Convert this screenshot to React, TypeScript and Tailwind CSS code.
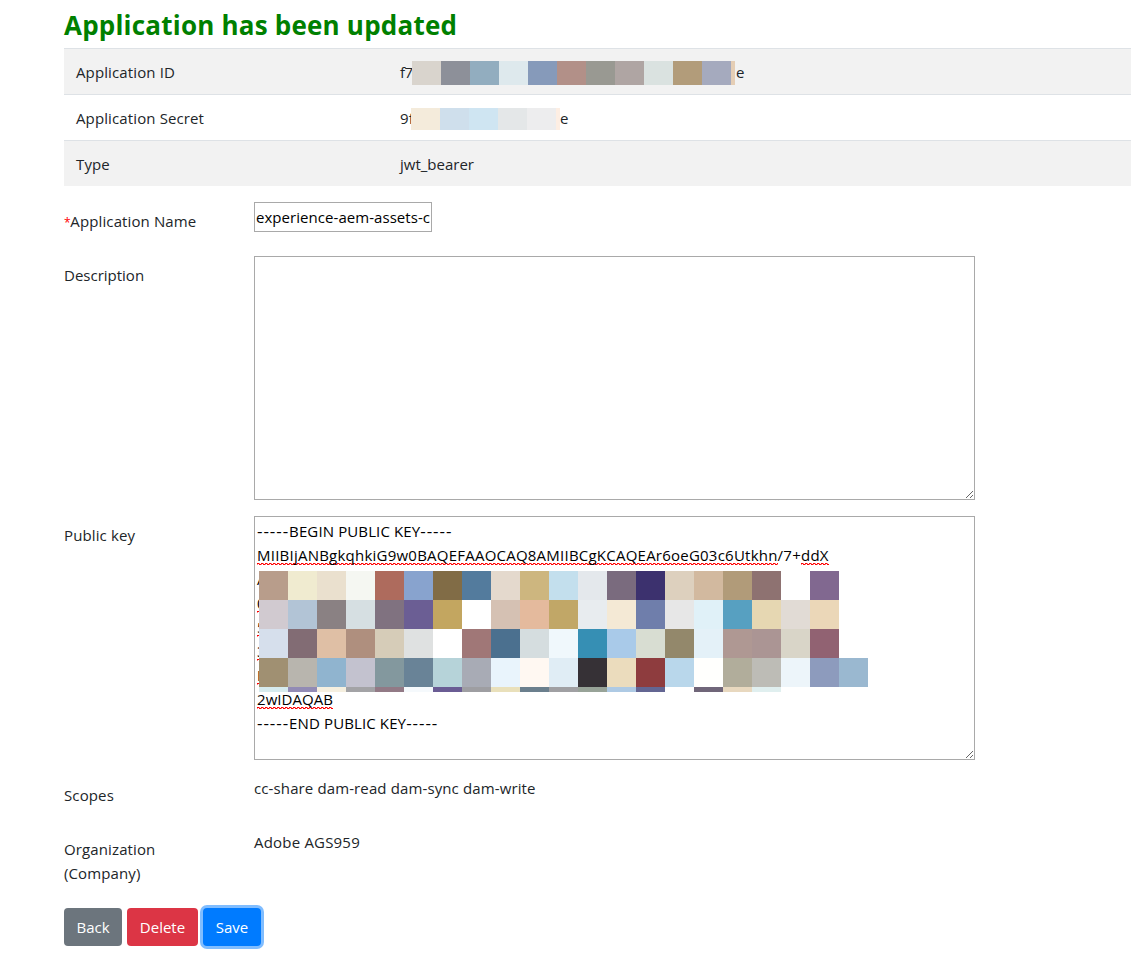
import React from 'react';

const idMask = ['#d9d4cd', '#8d9099', '#92adbf', '#dee9ed', '#869aba', '#b29088', '#999992', '#afa5a3', '#dae2e0', '#b29c7a', '#a5aabe'];
const secretMask = ['#f4ebdb', '#cfdfec', '#cfe5f2', '#e4e7e8', '#ededee'];

const keyMask = [
  'b89d8b f0ebd0 eae0ce f5f7f2 ae6b5d 88a3ce 816c46 537b9d e4d9cd cdb67f c3dfed e4e8ec 7a6b7e 3c316e ddd0be d2b99f b19b79 8e7271 ffffff 816890',
  'd1cad0 b2c4d6 8a8183 d6dfe2 807280 6b5e94 c3a660 ffffff d5c1b3 e4ba9d c1a767 e8ecef f4e9d5 6f7eab e7e7e7 e0f1f8 57a0c1 e6d7b2 e1dbd5 ebd7b8',
  'd6dfec 826c74 dfbfa5 af8f7e d6ccb8 dfe1e1 ffffff a07777 4b708f d5dddf f0f8fc 368fb4 a9cae9 d8ddd2 93886b e4f1f8 af9893 ab9594 d9d5c8 916272',
  'a09072 b8b5ae 90b4cf c3c2cf 83989e 698397 b6d3d9 a8abb5 e9f4fc fff8f2 e0edf5 363136 ebdcbd 8e3c3e b9d7eb fffffd b1ad9b bdbcb6 edf5fa 8d9bbd 9ab8d0',
  'd6ebee 928bb5 f5efdf a3a3a6 927a86 f5f9fc 6a5c94 9e9ea2 e9e0bb 6b7f8d a0a0a3 98a398 aecae4 636592 ffffff 706679 e8d8bf e0efef',
].map((row) => row.split(' '));

function Mask({ colors, edge, className }: { colors: string[]; edge: string; className: string }) {
  return (
    <span className={`absolute flex ${className}`}>
      {colors.map((c, i) => (
        <span key={i} className="w-[29px]" style={{ backgroundColor: c }} />
      ))}
      <span className={`w-1 ${edge}`} />
    </span>
  );
}

function InfoRow({ label, shaded, children }: { label: string; shaded?: boolean; children: React.ReactNode }) {
  return (
    <div className={`flex h-[46px] border-t border-[#dee2e6] pl-3 pt-[11px] ${shaded ? 'bg-[#f2f2f2]' : 'bg-white'}`}>
      <div className="w-[324px] shrink-0">{label}</div>
      <div className="relative whitespace-nowrap">{children}</div>
    </div>
  );
}

function Field({ label, children }: { label: React.ReactNode; children: React.ReactNode }) {
  return (
    <div className="mb-4 flex items-start">
      <div className="w-[160px] shrink-0 pt-[7px]">{label}</div>
      <div className="ml-[30px]">{children}</div>
    </div>
  );
}

const Dashes = () => <span className="text-[17px] leading-[0] tracking-[0.95px]">-----</span>;

/* Two offset one-pixel rows form the red zigzag under a misspelt word. */
const Misspelt = ({ children }: { children: React.ReactNode }) => (
  <span className="inline-block h-6 bg-[linear-gradient(90deg,#ff0000_2px,#ff8080_2px,#ff8080_3px,transparent_3px),linear-gradient(90deg,#ff8080_1px,transparent_1px,transparent_2px,#ff0000_2px)] bg-[length:4px_1px,4px_1px] bg-[position:0_20px,0_21px] bg-repeat-x align-top">
    {children}
  </span>
);

export default function App() {
  return (
    <div className="h-[956px] overflow-hidden bg-white pl-16 pt-[7px] font-['Open_Sans','Noto_Sans',sans-serif] text-[15px] leading-6 tracking-[0.12px] text-[#212529]">
      <h3 className="mb-2 h-[33px] whitespace-nowrap text-[26px] font-bold leading-[36px] tracking-[0.21px] text-[#008000]">
        Application has been updated
      </h3>

      <div className="mb-4">
        <InfoRow label="Application ID" shaded>
          <span className="tracking-[-0.6px]">f7</span>
          <Mask colors={idMask} edge="bg-[#e5ceb5]" className="left-3 top-px h-6" />
          <span className="absolute left-[336px] top-0">e</span>
        </InfoRow>
        <InfoRow label="Application Secret">
          <span>9f</span>
          <Mask colors={secretMask} edge="bg-[#fdeee3]" className="left-[11px] top-[2px] h-[22px]" />
          <span className="absolute left-40 top-0">e</span>
        </InfoRow>
        <InfoRow label="Type" shaded>
          <span className="tracking-normal">jwt_bearer</span>
        </InfoRow>
      </div>

      <Field label={<><span className="text-[12px] leading-[0] tracking-[-0.3px] text-[#ff0000]">*</span>Application Name</>}>
        <input
          defaultValue="experience-aem-assets-c"
          className="block h-[30px] w-[178px] border border-[#a9a9a9] bg-white px-px text-black tracking-[0.05px] outline-none"
        />
        <div className="h-2" />
      </Field>

      <Field label={<span className="tracking-normal">Description</span>}>
        <textarea className="block h-[244px] w-[721px] border border-[#a9a9a9] bg-white p-0.5 outline-none" />
      </Field>

      <Field label="Public key">
        <div className="relative h-[244px] w-[721px] resize overflow-auto whitespace-nowrap border border-[#a9a9a9] bg-white p-0.5 text-black">
          <div className="h-6"><Dashes />BEGIN PUBLIC KEY<Dashes /></div>
          <div className="h-6 tracking-[0.23px]">
            <Misspelt>MIIBIjANBgkqhkiG9w0BAQEFAAOCAQ8AMIIBCgKCAQEAr6oeG03c6Utkhn</Misspelt>/7+<Misspelt>ddX</Misspelt>
          </div>
          <div className="h-6">A</div>
          <div className="h-6"><Misspelt>0</Misspelt></div>
          <div className="h-6"><Misspelt>5</Misspelt></div>
          <div className="h-6"><Misspelt>3</Misspelt></div>
          <div className="h-6"><Misspelt>F</Misspelt></div>
          <div className="h-6 tracking-[0.05px]"><Misspelt>2wIDAQAB</Misspelt></div>
          <div className="h-6"><Dashes />END PUBLIC KEY<Dashes /></div>
          <div className="absolute left-1 top-[54px]">
            {keyMask.map((row, r) => (
              <div key={r} className={`flex ${r === 4 ? 'h-[5px]' : 'h-[29px]'}`}>
                {row.map((c, i) => (
                  <div key={i} className="w-[29px]" style={{ backgroundColor: `#${c}` }} />
                ))}
              </div>
            ))}
          </div>
        </div>
      </Field>

      <Field label="Scopes">
        <div className="h-[38px]">cc-share dam-read dam-sync dam-write</div>
      </Field>

      <Field label="Organization (Company)">
        <div className="h-[62px] tracking-[0.2px]">Adobe AGS959</div>
      </Field>

      <div className="flex gap-[5px] tracking-normal text-white">
        <button className="h-[38px] w-[58px] rounded bg-[#6c757d]">Back</button>
        <button className="h-[38px] w-[71px] rounded bg-[#dc3545]">Delete</button>
        <button className="h-[38px] w-[58px] rounded bg-[#007bff] shadow-[0_0_0_3px_#80bdff]">Save</button>
      </div>
    </div>
  );
}
